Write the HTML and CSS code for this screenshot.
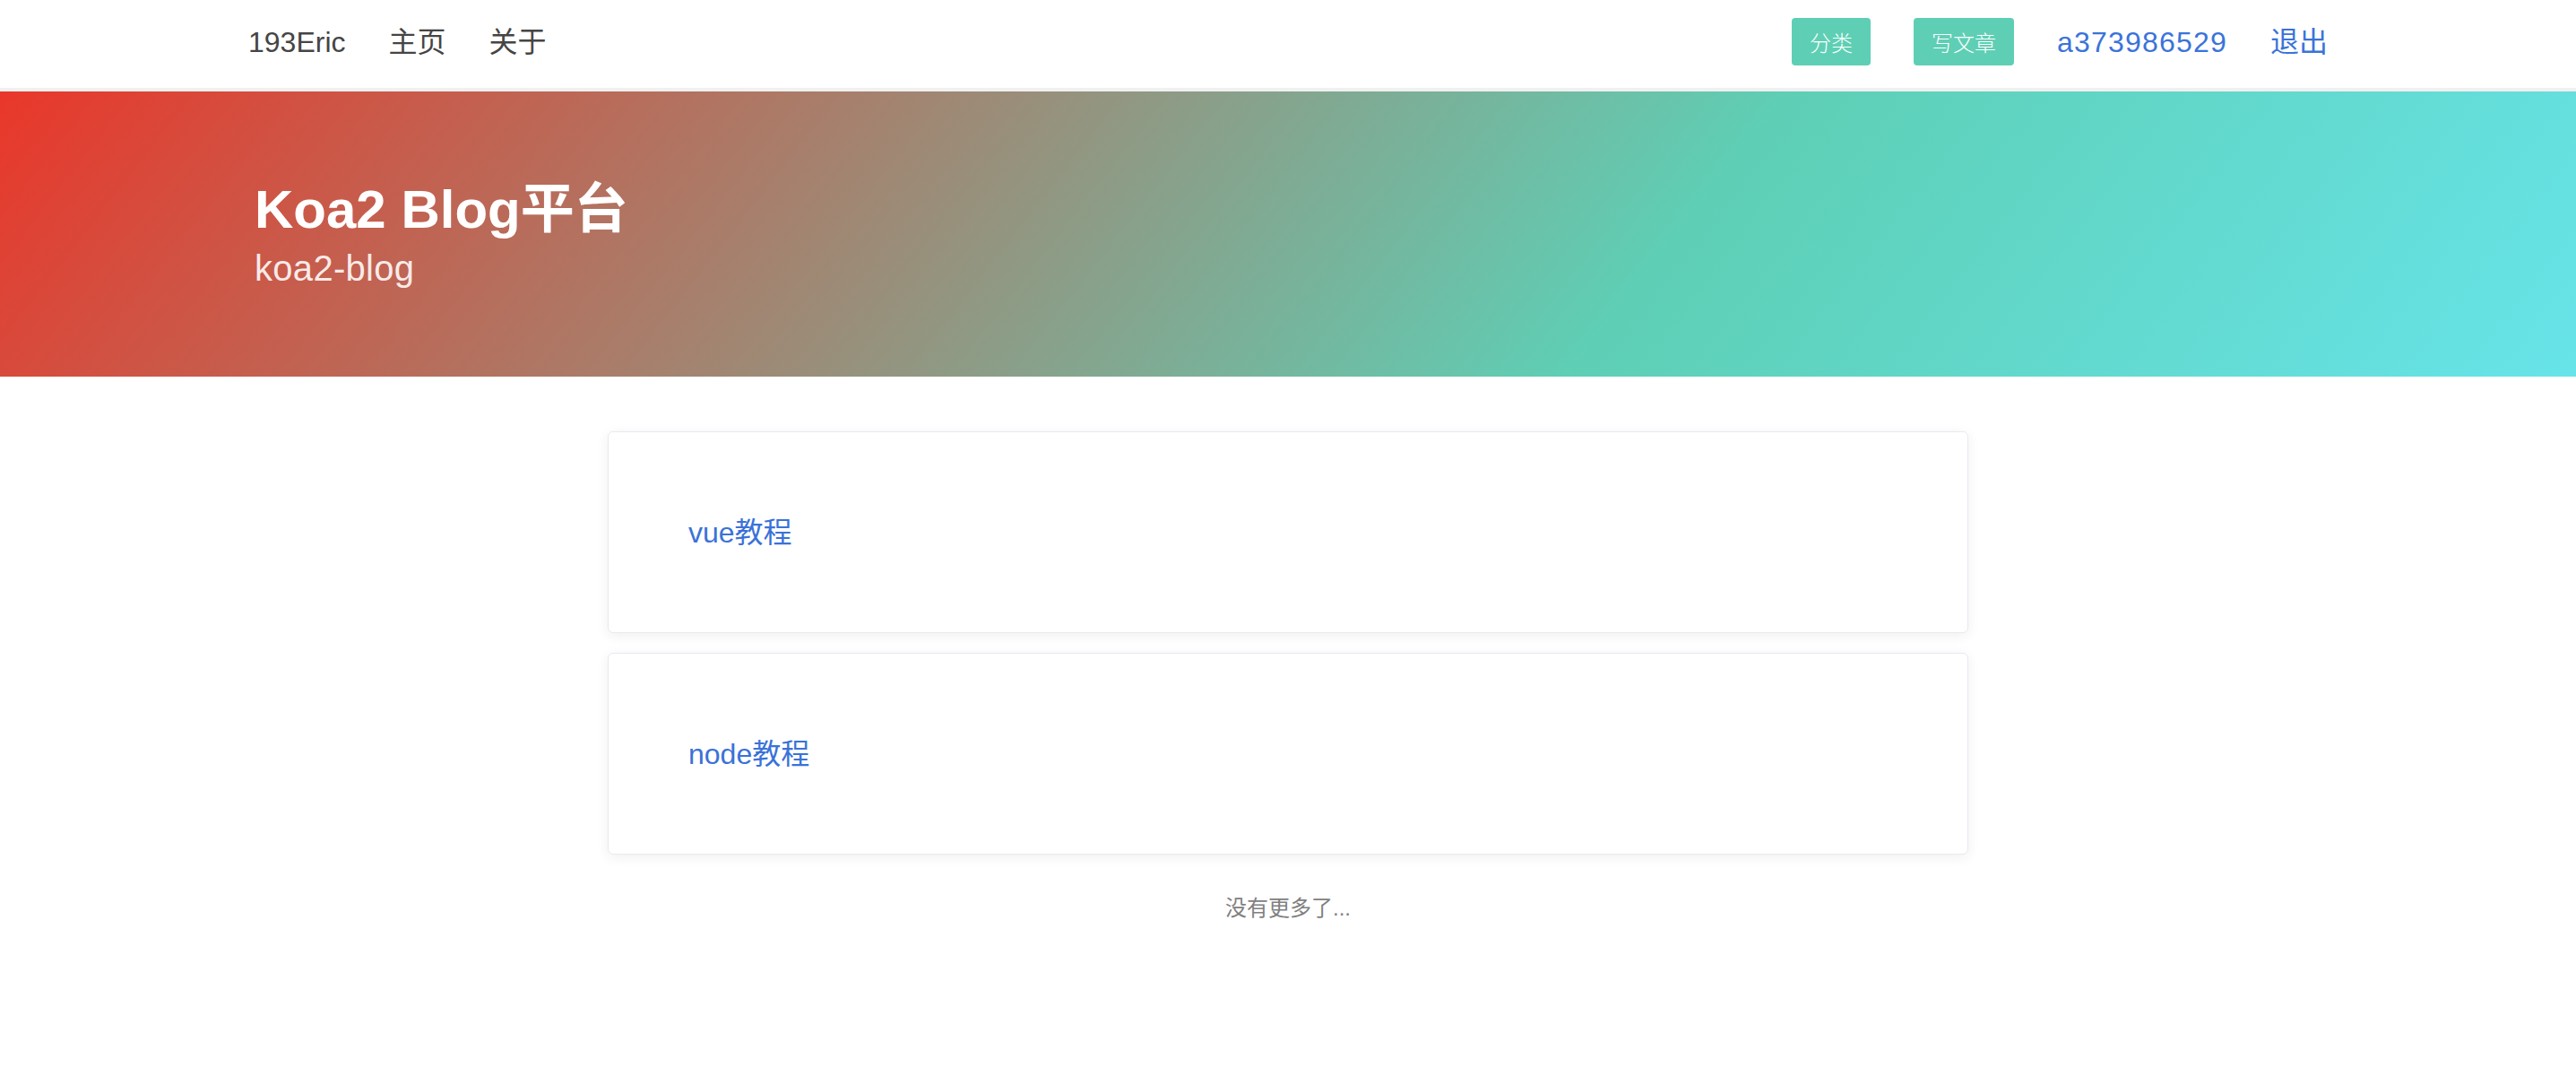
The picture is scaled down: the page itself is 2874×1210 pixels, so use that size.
FILE: index.html
```html
<!DOCTYPE html>
<html lang="zh-CN">
<head>
<meta charset="utf-8">
<title>Koa2 Blog平台</title>
<link rel="stylesheet" href="styles.css">
</head>
<body>
<header class="topbar">
  <div class="container topbar-inner">
    <nav class="nav-left">
      <a class="nav-link" href="#">193Eric</a>
      <a class="nav-link" href="#">主页</a>
      <a class="nav-link" href="#">关于</a>
    </nav>
    <nav class="nav-right">
      <a class="btn" href="#">分类</a>
      <a class="btn" href="#">写文章</a>
      <a class="user-link user-name" href="#">a373986529</a>
      <a class="user-link" href="#">退出</a>
    </nav>
  </div>
</header>
<section class="hero">
  <div class="container hero-inner">
    <h1 class="hero-title">Koa2 Blog平台</h1>
    <p class="hero-sub">koa2-blog</p>
  </div>
</section>
<main class="list">
  <div class="card"><a class="card-link" href="#">vue教程</a></div>
  <div class="card"><a class="card-link" href="#">node教程</a></div>
  <p class="no-more">没有更多了...</p>
</main>
</body>
</html>
```
FILE: styles.css
```css
* { box-sizing: border-box; }
html, body { margin: 0; padding: 0; background: #ffffff; }
body {
  font-family: "Liberation Sans", "Noto Sans CJK SC", sans-serif;
  color: #444444;
}
a { text-decoration: none; }

.container {
  width: 2320px;
  margin: 0 auto;
}

.topbar {
  height: 102px;
  border-bottom: 4px solid #f0f0f0;
  background: #ffffff;
}
.topbar-inner {
  height: 98px;
  padding-bottom: 5px;
  display: flex;
  align-items: center;
  justify-content: space-between;
}
.nav-left, .nav-right {
  display: flex;
  align-items: center;
  gap: 48px;
}
.nav-link {
  font-size: 32px;
  line-height: 40px;
  color: #454545;
}
.btn {
  display: flex;
  align-items: center;
  height: 53px;
  padding: 0 20px;
  background: #5ecfb4;
  color: #ffffff;
  font-size: 24px;
  font-weight: 300;
  border-radius: 4px;
}
.user-link {
  font-size: 32px;
  line-height: 40px;
  color: #3b73d9;
}
.user-name { letter-spacing: 1.2px; }

.hero {
  height: 318px;
  background: linear-gradient(128deg, #e9372a 0%, #5ecfb5 64%, #67e4e9 100%);
}
.hero-inner {
  padding: 96px 0 0 7px;
}
.hero-title {
  margin: 0;
  font-size: 60px;
  line-height: 72px;
  font-weight: 700;
  color: #ffffff;
}
.hero-sub {
  margin: 5px 0 0 0;
  font-size: 40px;
  line-height: 48px;
  letter-spacing: 0.3px;
  color: rgba(255, 255, 255, 0.88);
}

.list {
  width: 1518px;
  margin: 61px auto 0;
}
.card {
  height: 225px;
  display: flex;
  align-items: center;
  padding: 0 89px;
  margin-bottom: 22px;
  background: #ffffff;
  border: 1px solid #e8eaf1;
  border-radius: 6px;
  box-shadow: 0 3px 14px rgba(40, 40, 60, 0.07);
}
.card-link {
  font-size: 32px;
  line-height: 44px;
  color: #3a72d8;
}
.no-more {
  margin: 42px 0 0;
  text-align: center;
  font-size: 24px;
  line-height: 36px;
  color: #808080;
}
```
